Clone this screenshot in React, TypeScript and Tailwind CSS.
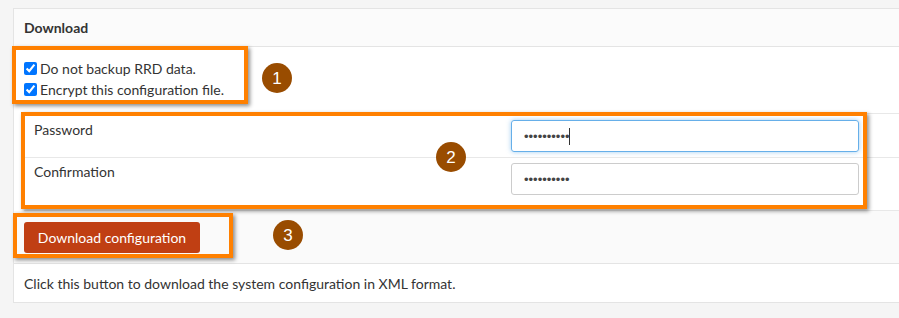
import React from "react";

const font = { fontFamily: "Lato, 'Noto Sans', sans-serif" };
const dotFont = { fontFamily: "'Liberation Sans', Arial, sans-serif" };

function Badge({ n, x, y }: { n: string; x: number; y: number }) {
  return (
    <div
      className="absolute w-[30px] h-[30px] rounded-full bg-[#994c00] text-white flex items-center justify-center text-[17px] leading-none"
      style={{ left: x - 15, top: y - 15, fontFamily: "'Liberation Sans', Arial, sans-serif" }}
    >
      {n}
    </div>
  );
}

export default function App() {
  return (
    <div className="relative w-[899px] h-[318px] bg-[#f5f5f5] overflow-hidden text-[#333] text-[14px]" style={font}>
      <div className="pt-[8px] pl-[13px]">
        <div className="bg-white border border-r-0 border-[#e4e4e4] w-[890px]">
          {/* header */}
          <div className="h-[38px] bg-[#fbfbfb] border-b border-[#e4e4e4] flex items-center pl-[10px] font-bold text-[14px]">
            Download
          </div>
          {/* checkbox row */}
          <div className="h-[66px] pl-[10px] pt-[11px] flex flex-col">
            <label className="flex items-center h-[21px] gap-[3px]">
              <input type="checkbox" defaultChecked className="w-[13px] h-[13px] m-0" />
              <span>Do not backup RRD data.</span>
            </label>
            <label className="flex items-center h-[21px] gap-[3px]">
              <input type="checkbox" defaultChecked className="w-[13px] h-[13px] m-0" />
              <span>Encrypt this configuration file.</span>
            </label>
          </div>
          {/* inner table */}
          <div className="ml-[10px] border-t border-b border-[#e8e8e8]">
            <div className="h-[44px] flex border-b border-[#e8e8e8]">
              <div className="w-[487px] pl-[10px] pt-[5px]">Password</div>
              <div className="pt-[6px] relative">
                <input
                  type="password"
                  defaultValue="abcdefghij"
                  style={dotFont}
                  className="w-[348px] h-[32px] rounded-[3px] border border-[#66afe9] px-[12px] text-[13px] text-[#444] outline-none shadow-[0_0_5px_rgba(102,175,233,0.6)]"
                />
                <div className="absolute left-[58px] top-[14px] w-[1px] h-[17px] bg-[#333]" />
              </div>
            </div>
            <div className="h-[52px] flex">
              <div className="w-[487px] pl-[10px] pt-[3px]">Confirmation</div>
              <div className="pt-[5px]">
                <input
                  type="password"
                  defaultValue="abcdefghij"
                  style={dotFont}
                  className="w-[348px] h-[32px] rounded-[3px] border border-[#cccccc] px-[12px] text-[13px] text-[#444] outline-none"
                />
              </div>
            </div>
          </div>
          {/* button row */}
          <div className="h-[53px] bg-[#fafafa] border-b border-[#e4e4e4] pl-[10px] flex items-center">
            <button className="w-[176px] h-[31px] rounded-[3px] bg-[#c03f13] text-white text-[14px]" style={font}>
              Download configuration
            </button>
          </div>
          {/* footer */}
          <div className="h-[38px] pl-[10px] flex items-center">
            Click this button to download the system configuration in XML format.
          </div>
        </div>
      </div>

      {/* annotations */}
      <div className="absolute left-[12px] top-[46px] w-[236px] h-[58px] border-[4px] border-[#ff8000] shadow-[2px_2px_4px_rgba(0,0,0,0.45)]" />
      <div className="absolute left-[21px] top-[112px] w-[846px] h-[97px] border-[4px] border-[#ff8000] shadow-[2px_2px_4px_rgba(0,0,0,0.45)]" />
      <div className="absolute left-[13px] top-[213px] w-[220px] h-[45px] border-[4px] border-[#ff8000] shadow-[2px_2px_4px_rgba(0,0,0,0.45)]" />
      <Badge n="1" x={277} y={78} />
      <Badge n="2" x={451} y={157} />
      <Badge n="3" x={288} y={235} />
    </div>
  );
}
